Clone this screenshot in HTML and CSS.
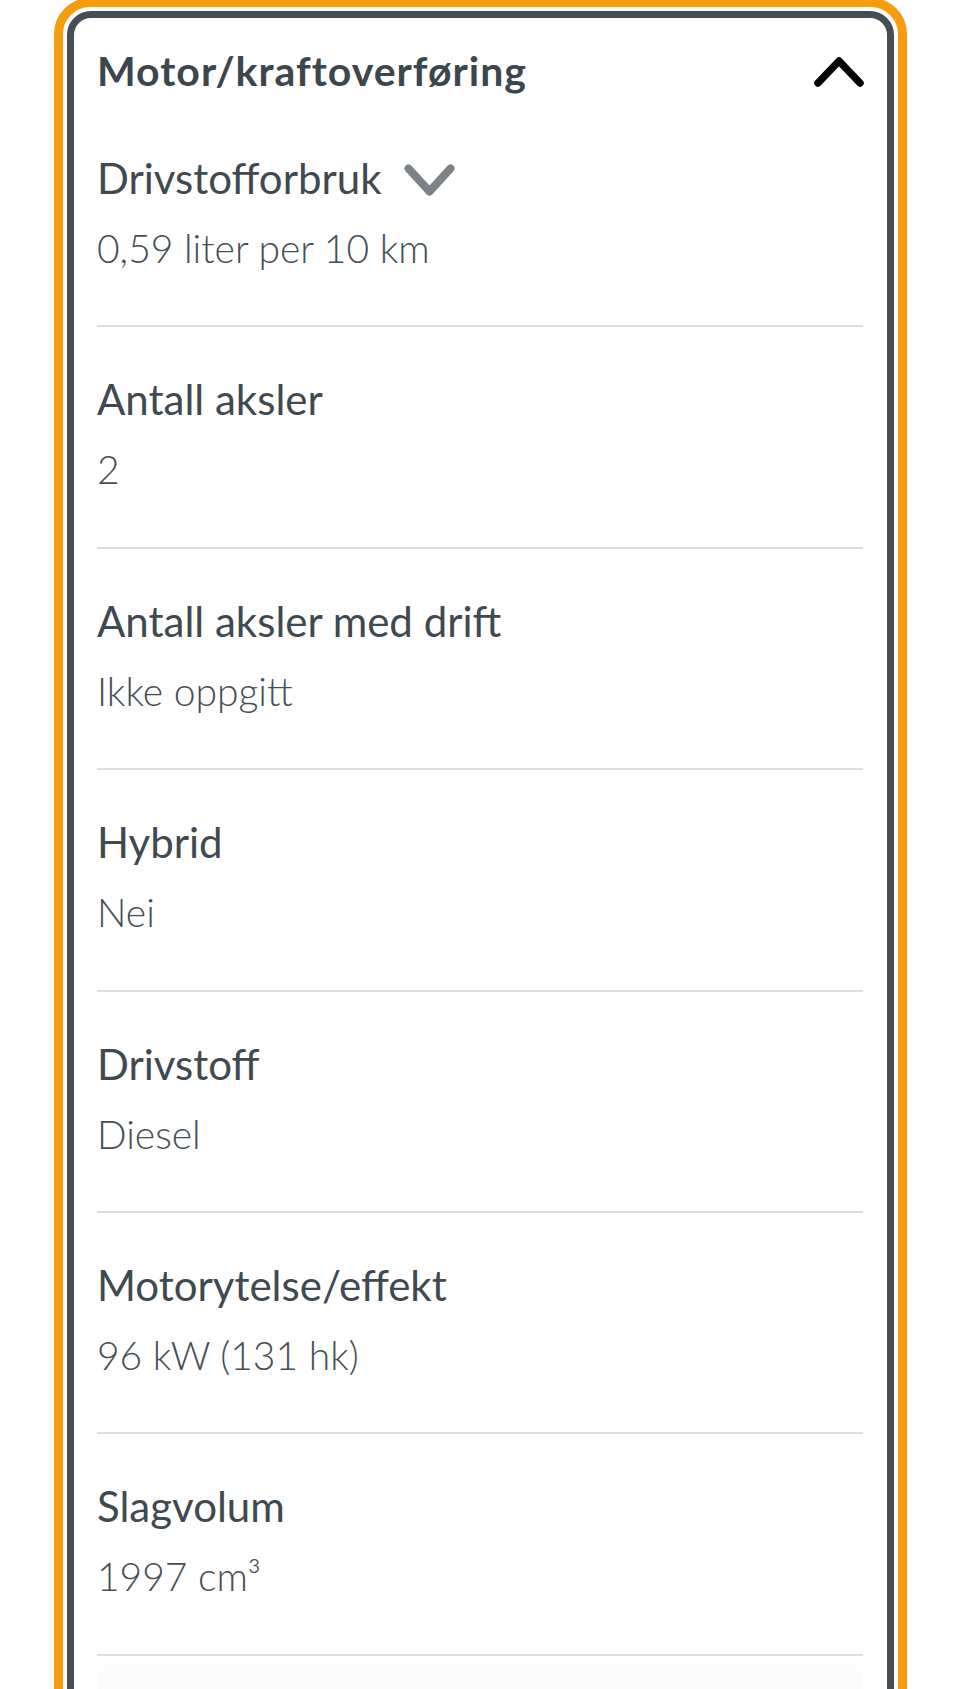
FILE: index.html
```html
<!DOCTYPE html>
<html lang="no">
<head>
  <meta charset="UTF-8">
  <meta name="viewport" content="width=device-width, initial-scale=1.0">
  <title>Motor/kraftoverføring</title>
  <link rel="stylesheet" href="styles.css">
</head>
<body>
  <div class="focus-ring">
    <section class="card">
      <div class="card-head">
        <h2>Motor/kraftoverføring</h2>
        <svg class="chev-up" viewBox="0 0 50 32" width="50" height="32" aria-hidden="true">
          <polyline points="4,27 25,5 46,27" />
        </svg>
      </div>
      <div class="row">
        <div class="label">Drivstofforbruk
          <svg class="chev-down" viewBox="0 0 51 32" width="51" height="32" aria-hidden="true">
            <polyline points="4.5,4.5 25.5,27.5 46.5,4.5" />
          </svg>
        </div>
        <div class="value">0,59 liter per 10 km</div>
      </div>
      <div class="row">
        <div class="label">Antall aksler</div>
        <div class="value">2</div>
      </div>
      <div class="row">
        <div class="label">Antall aksler med drift</div>
        <div class="value">Ikke oppgitt</div>
      </div>
      <div class="row">
        <div class="label">Hybrid</div>
        <div class="value">Nei</div>
      </div>
      <div class="row">
        <div class="label">Drivstoff</div>
        <div class="value">Diesel</div>
      </div>
      <div class="row">
        <div class="label">Motorytelse/effekt</div>
        <div class="value">96 kW (131 hk)</div>
      </div>
      <div class="row">
        <div class="label">Slagvolum</div>
        <div class="value">1997 cm³</div>
      </div>
      <div class="more"></div>
    </section>
  </div>
</body>
</html>
```

FILE: styles.css
```css
body { margin: 0; background: #fff; font-family: Lato, "Open Sans", sans-serif; color: #3f4950; overflow: hidden; }
.focus-ring { width: 827px; margin: -2px 0 0 54px; border: 9px solid #f59d0e; border-radius: 36px; padding: 4px; }
.card { border: 7px solid #454e55; border-radius: 24px; padding: 0 24px 0 23px; background: #fff; }
.card-head { display: flex; justify-content: space-between; align-items: center; padding-top: 29px; margin-bottom: 11px; }
.card-head h2 { margin: 0; font-size: 41px; line-height: 48px; font-weight: 700; letter-spacing: 1px; color: #3c464d; }
.chev-up { margin-right: -1px; margin-top: 2px; }
.chev-up polyline { fill: none; stroke: #000; stroke-width: 7.5; stroke-linecap: round; stroke-linejoin: round; }
.chev-down { margin-left: 22px; margin-top: 3px; }
.chev-down polyline { fill: none; stroke: #7c8287; stroke-width: 8; stroke-linecap: round; stroke-linejoin: round; }
.row { padding: 46px 0 53.4px; border-bottom: 2px solid #dcdcdc; }
.label { display: flex; align-items: center; font-size: 42px; line-height: 52px; font-weight: 400; }
.value { margin-top: 21px; font-size: 39px; line-height: 47px; font-weight: 300; color: #454e55; }
.more { height: 60px; background: linear-gradient(#fff, #fbfbfb 20px, #fdfdfd); }
```
